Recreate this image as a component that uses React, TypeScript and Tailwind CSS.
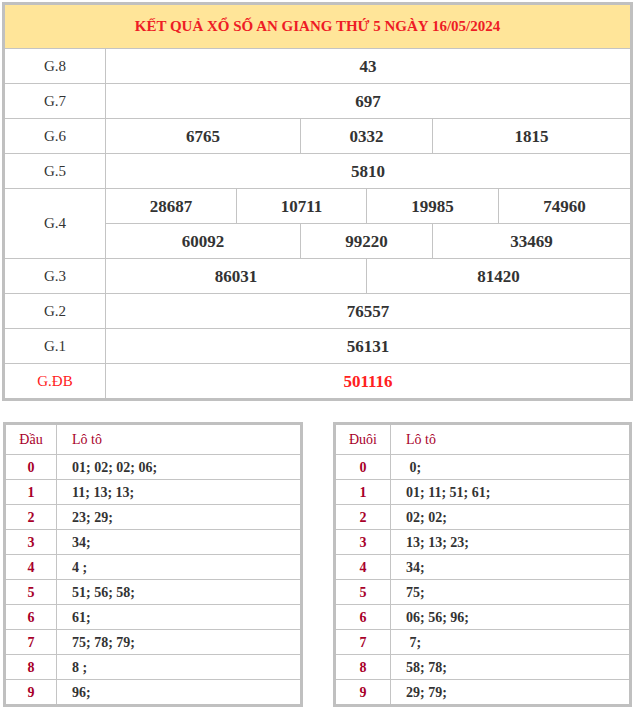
const serif = { fontFamily: '"Liberation Serif", "Times New Roman", serif' }

type Cell = { text: string; w: string }

const rows: { label: string; lines: Cell[][]; red?: boolean }[] = [
  { label: "G.8", lines: [[{ text: "43", w: "flex-1" }]] },
  { label: "G.7", lines: [[{ text: "697", w: "flex-1" }]] },
  {
    label: "G.6",
    lines: [[
      { text: "6765", w: "w-[194px]" },
      { text: "0332", w: "w-[132px]" },
      { text: "1815", w: "flex-1" },
    ]],
  },
  { label: "G.5", lines: [[{ text: "5810", w: "flex-1" }]] },
  {
    label: "G.4",
    lines: [
      [
        { text: "28687", w: "w-[130px]" },
        { text: "10711", w: "w-[130px]" },
        { text: "19985", w: "w-[132px]" },
        { text: "74960", w: "flex-1" },
      ],
      [
        { text: "60092", w: "w-[194px]" },
        { text: "99220", w: "w-[132px]" },
        { text: "33469", w: "flex-1" },
      ],
    ],
  },
  {
    label: "G.3",
    lines: [[
      { text: "86031", w: "w-[260px]" },
      { text: "81420", w: "flex-1" },
    ]],
  },
  { label: "G.2", lines: [[{ text: "76557", w: "flex-1" }]] },
  { label: "G.1", lines: [[{ text: "56131", w: "flex-1" }]] },
  { label: "G.ĐB", lines: [[{ text: "501116", w: "flex-1" }]], red: true },
]

const dau = ["01; 02; 02; 06;", "11; 13; 13;", "23; 29;", "34;", "4 ;", "51; 56; 58;", "61;", "75; 78; 79;", "8 ;", "96;"]
const duoi = [" 0;", "01; 11; 51; 61;", "02; 02;", "13; 13; 23;", "34;", "75;", "06; 56; 96;", " 7;", "58; 78;", "29; 79;"]

const LotoTable = ({ title, items, width, colW }: { title: string; items: string[]; width: string; colW: string }) => (
  <div className={`${width} border-[3px] border-[#c0c0c0] bg-white`}>
    <div className="flex h-[29px] items-center">
      <div className={`${colW} h-full flex items-center justify-center text-[14px] text-[#a8002a] border-r border-[#c4c4c4]`}>{title}</div>
      <div className="pl-[15px] text-[14px] text-[#a8002a]">Lô tô</div>
    </div>
    {items.map((v, i) => (
      <div key={i} className="flex h-[25px] border-t border-[#c4c4c4]">
        <div className={`${colW} flex items-center justify-center text-[14px] font-bold text-[#a8002a] border-r border-[#c4c4c4]`}>{i}</div>
        <div className="pl-[15px] flex items-center text-[14px] font-bold text-[#333333] whitespace-pre">{v}</div>
      </div>
    ))}
  </div>
)

export default function App() {
  return (
    <div className="w-[637px] h-[709px] bg-white pt-[2px] pl-[2px]" style={serif}>
      <div className="w-[631px] border-[3px] border-[#c0c0c0]">
        <div className="h-[43px] bg-[#ffe599] flex items-center justify-center text-[15px] font-bold text-[#ee1c25]">
          KẾT QUẢ XỔ SỐ AN GIANG THỨ 5 NGÀY 16/05/2024
        </div>
        {rows.map((r) => (
          <div key={r.label} className="flex border-t border-[#c4c4c4]">
            <div className={`w-[100px] shrink-0 flex items-center justify-center text-[15px] ${r.red ? "text-[#ff2020]" : "text-[#333333]"}`}>
              {r.label}
            </div>
            <div className="flex-1 flex flex-col border-l border-[#c4c4c4]">
              {r.lines.map((line, li) => (
                <div key={li} className={`flex h-[34px] ${li > 0 ? "h-[35px] border-t border-[#c4c4c4]" : ""}`}>
                  {line.map((c, ci) => (
                    <div
                      key={ci}
                      className={`${c.w} ${ci > 0 ? "border-l border-[#c4c4c4]" : ""} pt-[2px] flex items-center justify-center text-[17px] font-bold ${r.red ? "text-[#ff2020]" : "text-[#333333]"}`}
                    >
                      {c.text}
                    </div>
                  ))}
                </div>
              ))}
            </div>
          </div>
        ))}
      </div>
      <div className="flex mt-[21px] pl-[1px] gap-[30px]">
        <LotoTable title="Đầu" items={dau} width="w-[300px]" colW="w-[51px]" />
        <LotoTable title="Đuôi" items={duoi} width="w-[299px]" colW="w-[55px]" />
      </div>
    </div>
  )
}
